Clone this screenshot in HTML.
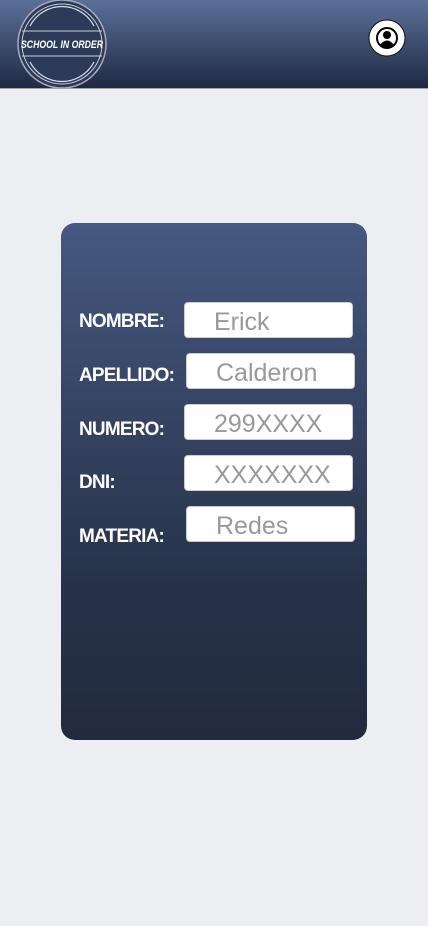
<!DOCTYPE html>
<html><head><meta charset="utf-8"><style>
body{margin:0;width:428px;height:926px;background:#eceef2;position:relative;overflow:hidden;font-family:"Liberation Sans",sans-serif}
.hdr{position:absolute;left:0;top:0;width:428px;height:88px;background:linear-gradient(#5b7099,#1f2a44);border-bottom:1px solid #9aa;}
.card{position:absolute;left:61px;top:223px;width:306px;height:517px;border-radius:14px;background:linear-gradient(#465880,#273249 70%,#222b3d)}
.lab{position:absolute;color:#fff;font-weight:bold;font-size:19px;letter-spacing:-0.8px;transform:translateY(-50%)}
.in{position:absolute;width:169px;height:36px;background:#fff;border-radius:4px;color:#999;font-size:25px;line-height:38px;box-sizing:border-box;padding-left:29px;border:1px solid #ccc}
</style></head><body>
<div class="hdr">
<svg width="100" height="92" style="position:absolute;left:12px;top:-1px" viewBox="0 0 100 92">
<circle cx="50" cy="45" r="44" fill="#2d3b58" stroke="#aab" stroke-width="1.5"/>
<circle cx="50" cy="45" r="40" fill="none" stroke="#ccd" stroke-width="1"/>
<path d="M18 27 A36 36 0 0 1 82 27" fill="none" stroke="#dde" stroke-width="1.2"/>
<path d="M18 63 A36 36 0 0 0 82 63" fill="none" stroke="#dde" stroke-width="1.2"/>
<line x1="10" y1="32" x2="90" y2="32" stroke="#ccd"/>
<line x1="10" y1="57" x2="90" y2="57" stroke="#ccd"/>
<text x="9" y="49" textLength="82" lengthAdjust="spacingAndGlyphs" font-family="Liberation Sans" font-weight="bold" font-style="italic" font-size="11" fill="#fff">SCHOOL IN ORDER</text>
</svg>
<svg width="38" height="38" style="position:absolute;left:368px;top:19px" viewBox="0 0 38 38">
<circle cx="19" cy="19" r="18" fill="#fff" stroke="#111" stroke-width="1"/>
<circle cx="19" cy="19" r="10" fill="none" stroke="#000" stroke-width="2"/>
<circle cx="19" cy="16" r="4" fill="#000"/>
<path d="M12 26 Q19 17 26 26 Q19 31 12 26Z" fill="#000"/>
</svg>
</div>
<div class="card"></div>
<div class="lab" style="left:79px;top:322px">NOMBRE:</div>
<div class="lab" style="left:79px;top:376px">APELLIDO:</div>
<div class="lab" style="left:79px;top:430px">NUMERO:</div>
<div class="lab" style="left:79px;top:483px">DNI:</div>
<div class="lab" style="left:79px;top:537px">MATERIA:</div>
<div class="in" style="left:184px;top:302px">Erick</div>
<div class="in" style="left:186px;top:353px">Calderon</div>
<div class="in" style="left:184px;top:404px">299XXXX</div>
<div class="in" style="left:184px;top:455px">XXXXXXX</div>
<div class="in" style="left:186px;top:506px">Redes</div>
</body></html>
